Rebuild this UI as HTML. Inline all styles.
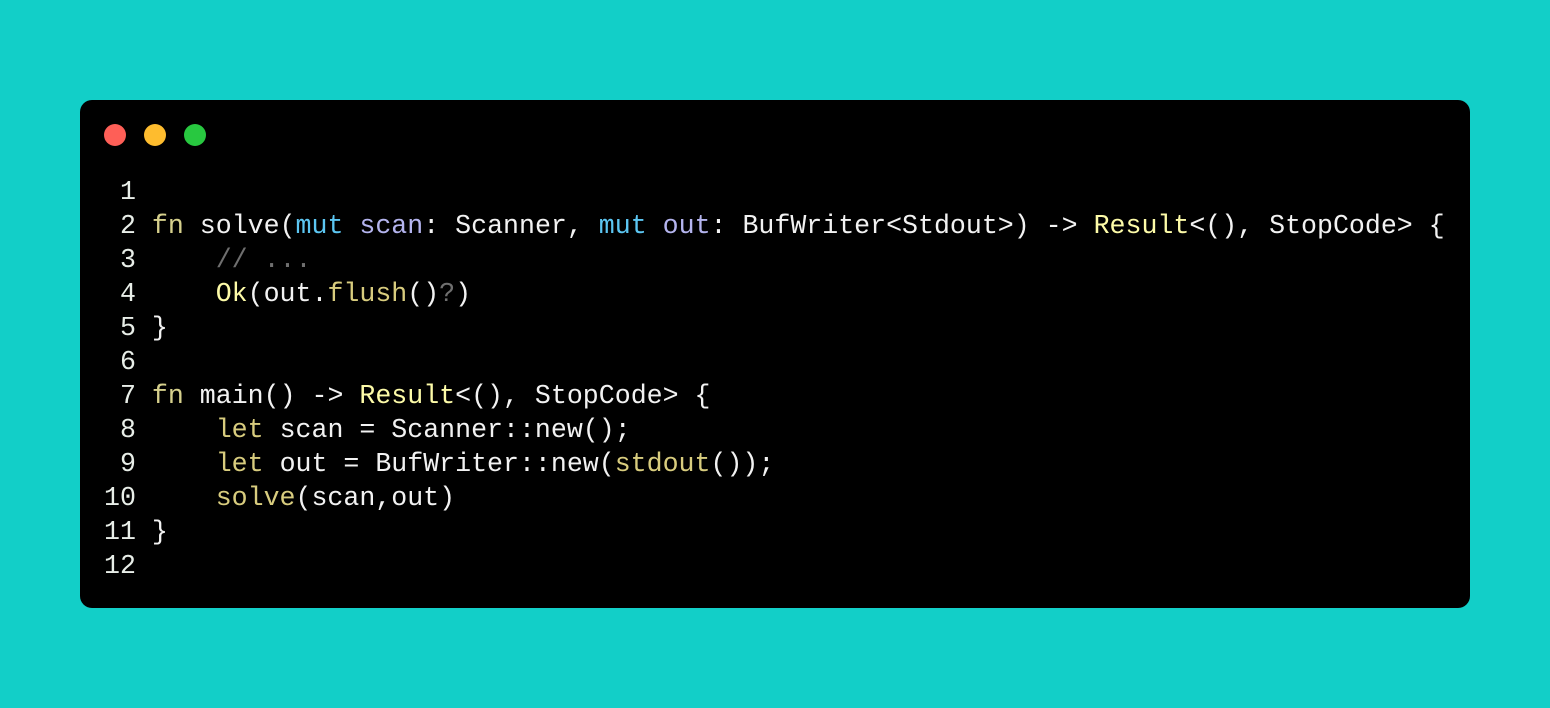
<!DOCTYPE html>
<html><head><meta charset="utf-8"><style>
html,body{margin:0;padding:0}
body{width:1550px;height:708px;background:#12cfc8;position:relative;overflow:hidden}
.win{position:absolute;left:80px;top:100px;width:1390px;height:508px;background:#000;border-radius:12px}
.dot{position:absolute;top:124px;width:22px;height:22px;border-radius:50%}
pre{position:absolute;left:104px;top:175px;margin:0;font-family:"Liberation Mono",monospace;font-size:26.6px;line-height:34px;color:#f2f2f2}
.n{color:#e8eee8}
.k{color:#d6d08c}
.m{color:#5cc6f2}
.v{color:#b4b4ee}
.y{color:#fdfba8}
.c{color:#6f6f6f}
.f{color:#d8cc7e}
</style></head><body>
<div class="win"></div>
<div class="dot" style="left:104px;background:#fe5f57"></div>
<div class="dot" style="left:144px;background:#febc2e"></div>
<div class="dot" style="left:184px;background:#28c840"></div>
<pre><span class="n"> 1</span>
<span class="n"> 2</span> <span class="k">fn</span> solve(<span class="m">mut</span> <span class="v">scan</span>: Scanner, <span class="m">mut</span> <span class="v">out</span>: BufWriter&lt;Stdout&gt;) -&gt; <span class="y">Result</span>&lt;(), StopCode&gt; {
<span class="n"> 3</span>     <span class="c">// ...</span>
<span class="n"> 4</span>     <span class="y">Ok</span>(out.<span class="f">flush</span>()<span class="c">?</span>)
<span class="n"> 5</span> }
<span class="n"> 6</span>
<span class="n"> 7</span> <span class="k">fn</span> main() -&gt; <span class="y">Result</span>&lt;(), StopCode&gt; {
<span class="n"> 8</span>     <span class="f">let</span> scan = Scanner::new();
<span class="n"> 9</span>     <span class="f">let</span> out = BufWriter::new(<span class="f">stdout</span>());
<span class="n">10</span>     <span class="f">solve</span>(scan,out)
<span class="n">11</span> }
<span class="n">12</span></pre>
</body></html>
